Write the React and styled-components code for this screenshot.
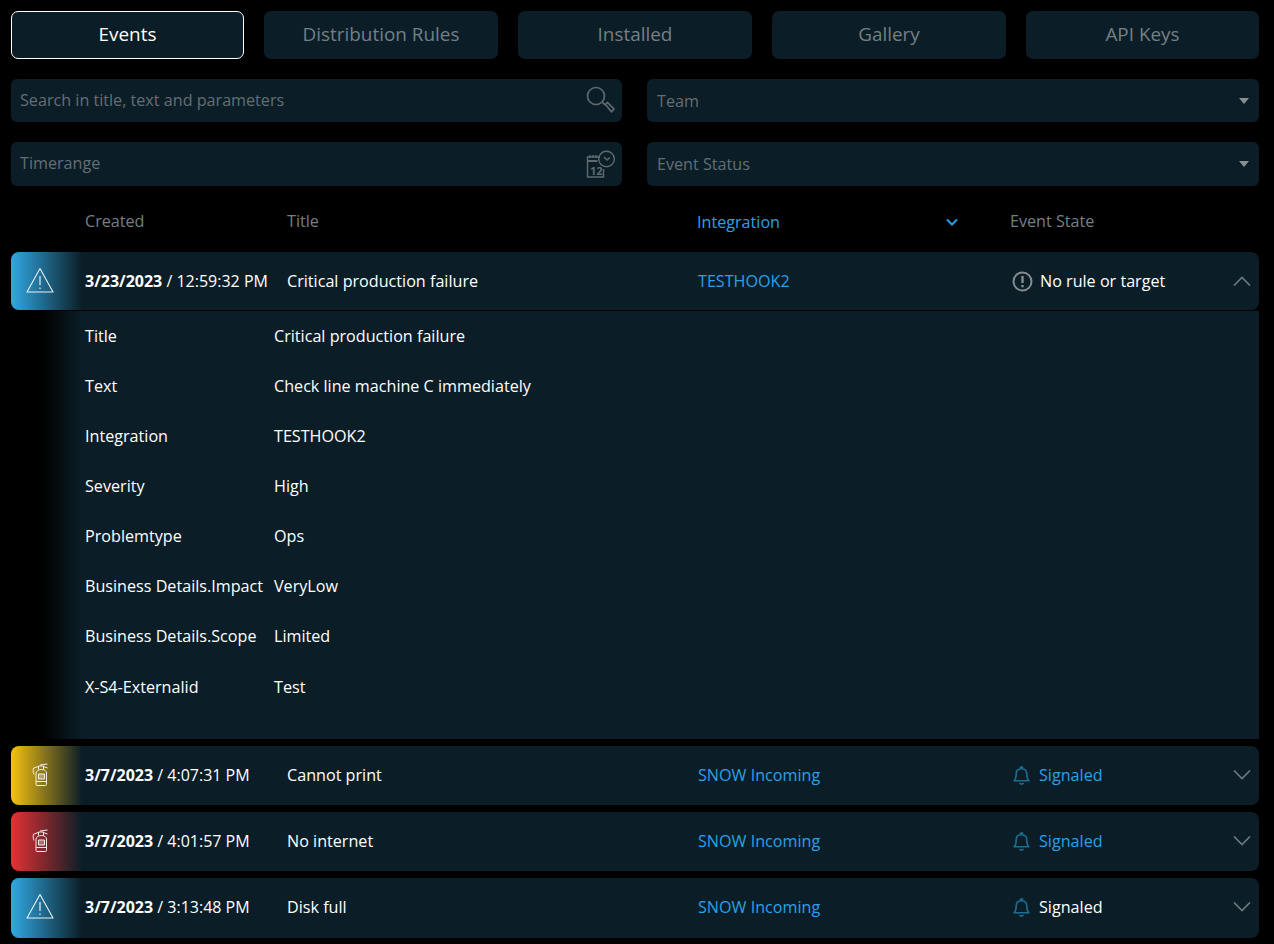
import React from "react";
import styled, { createGlobalStyle } from "styled-components";

const Global = createGlobalStyle`
  html, body { margin: 0; padding: 0; background: #000; }
  body { font-family: "Open Sans", "Liberation Sans", sans-serif; font-size: 16.15px; color: #fff; }
  * { box-sizing: border-box; }
`;
const Page = styled.div`
  width: 1274px; height: 944px; overflow: hidden; padding: 11px 15px 0 11px;
`;
const Tabs = styled.div`display: grid; grid-template-columns: 233px 234px 234px 234px 233px; gap: 20px;`;
const Tab = styled.div`
  height: 48px; border-radius: 7px; background: #0b1e27; display: flex; align-items: center; justify-content: center;
  font-size: 18.9px; padding-bottom: 2px; color: ${p => (p.$active ? "#fff" : "#757f84")};
  border: ${p => (p.$active ? "1px solid #fff" : "none")};
`;
const Filters = styled.div`
  display: grid; grid-template-columns: 611px 612px; column-gap: 25px; row-gap: 20px; margin-top: 20px;
  grid-template-rows: 43px 44px;
`;
const Field = styled.div`
  background: #0b1e27; border-radius: 6px; display: flex; align-items: center; justify-content: space-between;
  padding: 0 ${p => p.$pad || 8}px 0 ${p => (p.$select ? 10 : 9)}px; color: #636e74;
`;
const FieldText = styled.span`
  margin-top: ${p => (p.$select ? 0 : -2)}px;
`;
const Caret = styled.span`
  width: 0; height: 0; border-left: 5px solid transparent; border-right: 5px solid transparent; border-top: 6px solid #8b8f91;
`;
const HeaderRow = styled.div`
  display: grid; grid-template-columns: 74px 202px 410px 313px 1fr; height: 66px; align-items: center; color: #757f84; padding-top: 3px;
`;
const SortHead = styled.div`
  display: flex; align-items: center; justify-content: space-between; color: #2aa0ea; padding-right: 52px; margin-top: 2px;
`;
const Row = styled.div`
  display: grid; grid-template-columns: 74px 202px 411px 314px 221px 1fr; height: ${p => p.$h || 59}px; align-items: center;
  background: linear-gradient(90deg, ${p => p.$c} 0, #0b1e27 71px);
  border-radius: 8px; margin-bottom: ${p => p.$mb ?? 7}px; padding-bottom: ${p => (p.$open ? 0 : 2)}px;
`;
const IconCell = styled.div`display: flex; justify-content: center; align-items: center; padding-right: 16px;`;
const When = styled.div`font-size: 16px; white-space: nowrap; b { font-weight: 700; }`;
const Link = styled.div`color: #2aa0ea;`;
const State = styled.div`display: flex; align-items: center; gap: ${p => p.$gap}px; color: ${p => (p.$blue ? "#2aa0ea" : "#fff")};`;
const Chevron = styled.div`display: flex; align-items: center;`;
const Detail = styled.div`
  margin-top: 1px; height: 428px; padding-left: 74px; margin-bottom: 7px;
  background: linear-gradient(90deg, #000 30px, #0b1e27 72px);
`;
const DetailRow = styled.div`
  display: grid; grid-template-columns: 189px 1fr; height: 50px; align-items: center; white-space: nowrap;
  &:last-child { margin-top: 1px; }
`;

const Warn = () => (
  <svg width="30" height="28" viewBox="0 0 30 28" fill="none" stroke="#fff" strokeWidth="1.1" strokeLinejoin="round" opacity=".9">
    <path d="M15 1.500 28 25H2Z" />
    <path d="M15 9v9M15 20.500v1.400" strokeWidth="1.200" />
  </svg>
);
const Ext = () => (
  <svg width="18" height="24" viewBox="0 0 18 24" fill="none" stroke="#fff" strokeWidth="1" strokeLinejoin="round" opacity=".9">
    <path d="M5.500 22.500h9a1 1 0 0 0 1-1V10c0-2-2-3.500-5-3.500S5 8 5 10v11.500z" />
    <path d="M7.500 6.500V3h5v3.500M7.500 3.500 2.800 5c-.9 1-1 3.500.2 6.500M9 2l7.500-1M12.500 3.500 16.500 5" />
    <rect x="7.500" y="11" width="6" height="5" fill="#fff" fillOpacity=".35" />
    <path d="M5 18.500h10" />
  </svg>
);
const Bell = () => (
  <svg width="19" height="22" viewBox="0 0 18 20" fill="none" stroke="#1d6d92" strokeWidth="1.500" strokeLinejoin="round">
    <path d="M2 15.500c1.500-1.500 2-3 2-6.500 0-3 2-5 5-5s5 2 5 5c0 3.500.5 5 2 6.500z" />
    <path d="M7.800 3.500a1.200 1.200 0 0 1 2.400 0M7 17.800c1 .8 3 .8 4 0" />
  </svg>
);
const Info = () => (
  <svg width="21" height="21" viewBox="0 0 21 21" fill="none" stroke="#858c8f" strokeWidth="2">
    <circle cx="10.500" cy="10.500" r="9" />
    <path d="M10.500 5v7M10.500 14v2.200" strokeWidth="2.400" />
  </svg>
);
const Chev = ({ up }) => (
  <svg width="18" height="10" viewBox="0 0 18 10" fill="none" stroke="#6d777b" strokeWidth="1.700">
    <path d={up ? "M1 9.500 9 1.500l8 8" : "M1 .5l8 8 8-8"} />
  </svg>
);
const SearchIcon = () => (
  <svg width="29" height="29" viewBox="0 0 29 29" fill="none" stroke="#5f6a6f" strokeWidth="1.700">
    <circle cx="10" cy="10" r="8.500" />
    <path d="M16.500 16.500l3 2.500" />
    <path d="M19.500 18.500l2-2 6.500 6.500-2.500 2.800z" />
  </svg>
);
const CalIcon = () => (
  <svg width="30" height="28" viewBox="0 0 30 28" fill="none" stroke="#5f6a6f" strokeWidth="1.400">
    <path d="M14 7H1.500v20h16V19" />
    <path d="M1.500 11h10" strokeWidth="2" />
    <path d="M4 5v3M7 5v3M10 5v3" strokeWidth="1.500" />
    <circle cx="20.500" cy="9" r="7.800" />
    <path d="M18 7l3 3 3-2.500" strokeWidth="1.500" />
    <text x="4" y="24.500" fontSize="11" fontFamily="Open Sans" fontWeight="700" fill="#5f6a6f" stroke="none">12</text>
  </svg>
);
const SortChev = () => (
  <svg width="12" height="8" viewBox="0 0 12 8" fill="none" stroke="#2aa0ea" strokeWidth="2"><path d="M1 1.500l5 5 5-5" /></svg>
);

const details = [
  ["Title", "Critical production failure"],
  ["Text", "Check line machine C immediately"],
  ["Integration", "TESTHOOK2"],
  ["Severity", "High"],
  ["Problemtype", "Ops"],
  ["Business Details.Impact", "VeryLow"],
  ["Business Details.Scope", "Limited"],
  ["X-S4-Externalid", "Test"],
];

const rows = [
  { c: "#f5c211", icon: <Ext />, d: "3/7/2023", t: "4:07:31 PM", title: "Cannot print", blue: true, h: 59 },
  { c: "#e63033", icon: <Ext />, d: "3/7/2023", t: "4:01:57 PM", title: "No internet", blue: true, h: 59 },
  { c: "#31a8e2", icon: <Warn />, d: "3/7/2023", t: "3:13:48 PM", title: "Disk full", blue: false, h: 60 },
];

export default function App() {
  return (
    <Page>
      <Global />
      <Tabs>
        <Tab $active>Events</Tab>
        <Tab>Distribution Rules</Tab>
        <Tab>Installed</Tab>
        <Tab>Gallery</Tab>
        <Tab>API Keys</Tab>
      </Tabs>
      <Filters>
        <Field $pad={7}><FieldText>Search in title, text and parameters</FieldText><SearchIcon /></Field>
        <Field $select $pad={10}><FieldText $select>Team</FieldText><Caret /></Field>
        <Field $pad={6}><FieldText>Timerange</FieldText><CalIcon /></Field>
        <Field $select $pad={10}><FieldText $select>Event Status</FieldText><Caret /></Field>
      </Filters>
      <HeaderRow>
        <span />
        <span>Created</span>
        <span>Title</span>
        <SortHead>Integration<SortChev /></SortHead>
        <span>Event State</span>
      </HeaderRow>
      <Row $c="#31a8e2" $open $h={58} $mb={0}>
        <IconCell><Warn /></IconCell>
        <When><b>3/23/2023</b> / 12:59:32 PM</When>
        <div>Critical production failure</div>
        <Link>TESTHOOK2</Link>
        <State $gap={7}><Info />No rule or target</State>
        <Chevron><Chev up /></Chevron>
      </Row>
      <Detail>
        {details.map(([k, v]) => (
          <DetailRow key={k}><span>{k}</span><span>{v}</span></DetailRow>
        ))}
      </Detail>
      {rows.map(r => (
        <Row key={r.t} $c={r.c} $h={r.h}>
          <IconCell>{r.icon}</IconCell>
          <When><b>{r.d}</b> / {r.t}</When>
          <div>{r.title}</div>
          <Link>SNOW Incoming</Link>
          <State $blue={r.blue} $gap={8}><Bell />Signaled</State>
          <Chevron><Chev /></Chevron>
        </Row>
      ))}
    </Page>
  );
}
